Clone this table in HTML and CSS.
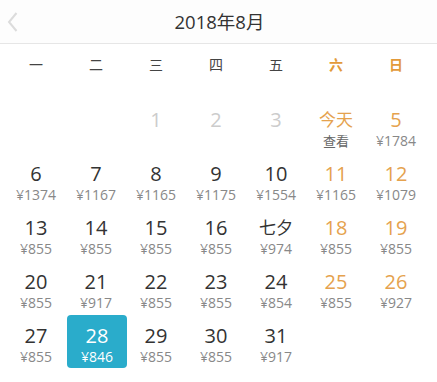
FILE: index.html
```html
<!DOCTYPE html>
<html lang="zh">
<head>
<meta charset="utf-8">
<link rel="stylesheet" href="styles.css">
</head>
<body>
<div class="page">
  <header class="header">
    <button class="back" aria-label="上个月">
      <svg width="12" height="22" viewBox="0 0 12 22"><path d="M10.5 2 L3 11 L10.5 20" fill="none" stroke="#dcdcdc" stroke-width="2"/></svg>
    </button>
    <h1 class="title">2018年8月</h1>
    <span></span>
  </header>
  <div class="cal">
    <div class="weekdays">
      <span>一</span><span>二</span><span>三</span><span>四</span><span>五</span><span class="wk">六</span><span class="wk">日</span>
    </div>
    <div class="grid">
      <div class="cell"></div>
      <div class="cell"></div>
      <div class="cell past"><span class="d">1</span></div>
      <div class="cell past"><span class="d">2</span></div>
      <div class="cell past"><span class="d">3</span></div>
      <div class="cell wk today"><span class="d cjk">今天</span><span class="p">查看</span></div>
      <div class="cell wk"><span class="d">5</span><span class="p">¥1784</span></div>

      <div class="cell"><span class="d">6</span><span class="p">¥1374</span></div>
      <div class="cell"><span class="d">7</span><span class="p">¥1167</span></div>
      <div class="cell"><span class="d">8</span><span class="p">¥1165</span></div>
      <div class="cell"><span class="d">9</span><span class="p">¥1175</span></div>
      <div class="cell"><span class="d">10</span><span class="p">¥1554</span></div>
      <div class="cell wk"><span class="d">11</span><span class="p">¥1165</span></div>
      <div class="cell wk"><span class="d">12</span><span class="p">¥1079</span></div>

      <div class="cell"><span class="d">13</span><span class="p">¥855</span></div>
      <div class="cell"><span class="d">14</span><span class="p">¥855</span></div>
      <div class="cell"><span class="d">15</span><span class="p">¥855</span></div>
      <div class="cell"><span class="d">16</span><span class="p">¥855</span></div>
      <div class="cell"><span class="d cjk">七夕</span><span class="p">¥974</span></div>
      <div class="cell wk"><span class="d">18</span><span class="p">¥855</span></div>
      <div class="cell wk"><span class="d">19</span><span class="p">¥855</span></div>

      <div class="cell"><span class="d">20</span><span class="p">¥855</span></div>
      <div class="cell"><span class="d">21</span><span class="p">¥917</span></div>
      <div class="cell"><span class="d">22</span><span class="p">¥855</span></div>
      <div class="cell"><span class="d">23</span><span class="p">¥855</span></div>
      <div class="cell"><span class="d">24</span><span class="p">¥854</span></div>
      <div class="cell wk"><span class="d">25</span><span class="p">¥855</span></div>
      <div class="cell wk"><span class="d">26</span><span class="p">¥927</span></div>

      <div class="cell"><span class="d">27</span><span class="p">¥855</span></div>
      <div class="cell sel"><span class="d">28</span><span class="p">¥846</span></div>
      <div class="cell"><span class="d">29</span><span class="p">¥855</span></div>
      <div class="cell"><span class="d">30</span><span class="p">¥855</span></div>
      <div class="cell"><span class="d">31</span><span class="p">¥917</span></div>
    </div>
  </div>
</div>
</body>
</html>
```
FILE: styles.css
```css
* { box-sizing: border-box; }
html, body { margin: 0; padding: 0; background: #fff; }
body {
  font-family: "Open Sans", "Noto Sans CJK SC", sans-serif;
  color: #333;
  width: 437px;
  height: 382px;
  overflow: hidden;
}
.header {
  height: 44px;
  display: grid;
  grid-template-columns: 1fr auto 1fr;
  align-items: center;
  border-bottom: 1px solid #e6e6e6;
  background: #fdfdfd;
  padding-left: 5px;
}
.back {
  justify-self: start;
  background: none;
  border: 0;
  padding: 0;
  margin-top: 0;
  width: 14px;
  height: 24px;
  display: flex;
  align-items: center;
  justify-content: center;
}
.title {
  margin: 0;
  font-size: 18.5px;
  font-weight: normal;
  color: #333;
  line-height: 24px;
  padding-top: 1px;
  margin-left: -3px;
}
.cal {
  width: 420px;
  margin-left: 6px;
}
.weekdays {
  display: grid;
  grid-template-columns: repeat(7, 60px);
  height: 40px;
  align-items: center;
  font-size: 14px;
  color: #444;
  text-align: center;
}
.weekdays .wk { color: #e39a3a; font-weight: bold; }
.grid {
  display: grid;
  grid-template-columns: repeat(7, 60px);
  grid-auto-rows: 54px;
  padding-top: 14px;
}
.cell {
  display: flex;
  flex-direction: column;
  align-items: center;
  padding-top: 10px;
  text-align: center;
}
.d {
  font-size: 20px;
  line-height: 24px;
  color: #333;
}
.d.cjk { font-size: 17px; }
.p {
  font-size: 14px;
  line-height: 18px;
  color: #888;
}
.past .d { color: #ccc; }
.wk .d { color: #e5a24e; }
.today .p { color: #666; font-size: 13px; }
.sel {
  background: #2aaccb;
  border-radius: 4px;
  margin: 1px -1px 0 1px;
  padding-top: 9px;
}
.sel .d, .sel .p { color: #fff; }
```
